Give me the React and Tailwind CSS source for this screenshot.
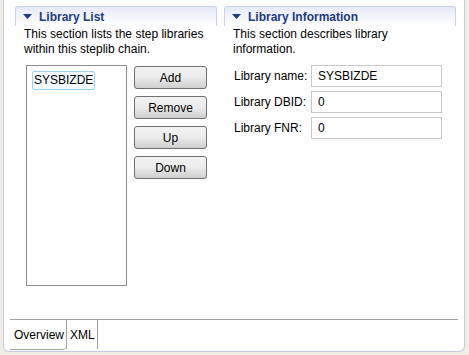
import React from 'react';

const font = { fontFamily: '"Liberation Sans", Arial, sans-serif' };

const SectionHeader = ({ title }) => (
  <div className="h-[20px] flex items-center pl-[7px] border-t border-l border-r border-[#c9d2ec] rounded-t-[3px] bg-gradient-to-b from-[#e6eaf8] to-white">
    <svg width="9" height="5" viewBox="0 0 9 5" className="mr-[7px]">
      <polygon points="0,0 9,0 4.5,5" fill="#1d3b80" />
    </svg>
    <span className="text-[12px] font-bold text-[#1d3b80]">{title}</span>
  </div>
);

const Button = ({ children }) => (
  <button className="w-[73px] h-[23px] rounded-[3px] border border-[#707070] bg-gradient-to-b from-[#f2f2f2] via-[#ebebeb] to-[#cfcfcf] text-[12px] text-black leading-none">
    {children}
  </button>
);

const Field = ({ label, value }) => (
  <div className="flex items-center h-[22px]">
    <span className="w-[77px] text-[12px] text-black">{label}</span>
    <div className="w-[131px] h-[22px] border border-[#c8c8c8] bg-white flex items-center pl-[6px] text-[12px] text-black">
      {value}
    </div>
  </div>
);

export default function App() {
  return (
    <div className="w-[469px] h-[355px] bg-[#f0ede3] pl-[3px] pr-[4px] pb-[3px]" style={font}>
      <div className="h-full bg-white border-l border-r border-b border-[#c5cbe3] rounded-b-[6px] flex flex-col">
        <div className="flex-1 flex pl-[11px] pt-[6px] gap-[7px]">
          <div className="w-[202px] flex flex-col">
            <SectionHeader title="Library List" />
            <div className="pl-[9px] pt-[1px] text-[12px] leading-[15px] text-black">
              This section lists the step libraries<br />within this steplib chain.
            </div>
            <div className="flex pl-[11px] pt-[8px] gap-[7px]">
              <div className="w-[101px] h-[221px] border border-[#8d8d96] p-[1px] pl-[5px]">
                <div className="inline-block border border-[#9bd3f5] rounded-[2px] bg-[#f4fbff] px-[1px] h-[19px] leading-[17px] text-[12px] text-black">
                  SYSBIZDE
                </div>
              </div>
              <div className="flex flex-col gap-[7px] pt-[1px]">
                <Button>Add</Button>
                <Button>Remove</Button>
                <Button>Up</Button>
                <Button>Down</Button>
              </div>
            </div>
          </div>
          <div className="w-[232px] flex flex-col">
            <SectionHeader title="Library Information" />
            <div className="pl-[9px] pt-[1px] text-[12px] leading-[15px] text-black">
              This section describes library<br />information.
            </div>
            <div className="flex flex-col gap-[4px] pl-[10px] pt-[8px]">
              <Field label="Library name:" value="SYSBIZDE" />
              <Field label="Library DBID:" value="0" />
              <Field label="Library FNR:" value="0" />
            </div>
          </div>
        </div>
        <div className="h-[31px] mx-[6px] mb-[1px] border-t border-[#a0a0a0] flex items-start">
          <div className="h-[30px] w-[56px] border-b border-[#a0a0a0] rounded-br-[4px] flex items-center pl-[4px] text-[12px] text-black">
            Overview
          </div>
          <div className="h-[29px] w-[32px] border-l border-r border-[#a0a0a0] flex items-center pl-[3px] text-[12px] text-black">
            XML
          </div>
        </div>
      </div>
    </div>
  );
}
